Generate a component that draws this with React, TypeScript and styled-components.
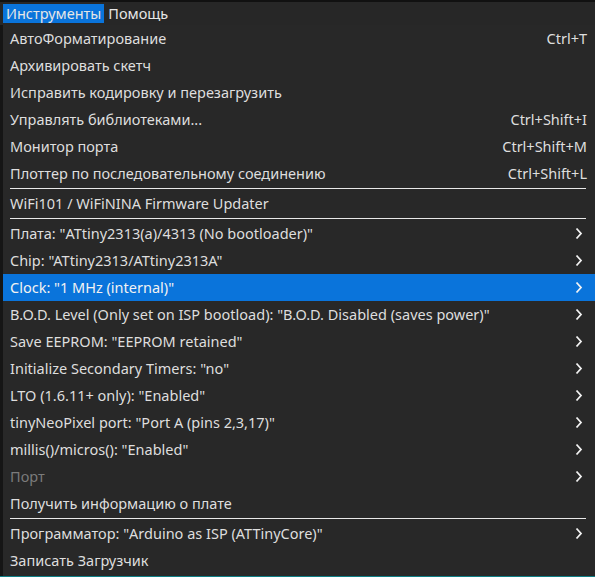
import { createGlobalStyle, styled } from "styled-components";

const GlobalStyle = createGlobalStyle`
  html, body {
    margin: 0;
    padding: 0;
    background: #1c1c1c;
  }
  body {
    font-family: "Noto Sans", "Open Sans", sans-serif;
    font-size: 14.5px;
    color: #dedede;
  }
`;

type Item =
  | { kind: "sep" }
  | { kind: "item"; label: string; shortcut?: string; sub?: boolean; active?: boolean; disabled?: boolean };

const items: Item[] = [
  { kind: "item", label: "АвтоФорматирование", shortcut: "Ctrl+T" },
  { kind: "item", label: "Архивировать скетч" },
  { kind: "item", label: "Исправить кодировку и перезагрузить" },
  { kind: "item", label: "Управлять библиотеками...", shortcut: "Ctrl+Shift+I" },
  { kind: "item", label: "Монитор порта", shortcut: "Ctrl+Shift+M" },
  { kind: "item", label: "Плоттер по последовательному соединению", shortcut: "Ctrl+Shift+L" },
  { kind: "sep" },
  { kind: "item", label: "WiFi101 / WiFiNINA Firmware Updater" },
  { kind: "sep" },
  { kind: "item", label: 'Плата: "ATtiny2313(a)/4313 (No bootloader)"', sub: true },
  { kind: "item", label: 'Chip: "ATtiny2313/ATtiny2313A"', sub: true },
  { kind: "item", label: 'Clock: "1 MHz (internal)"', sub: true, active: true },
  { kind: "item", label: 'B.O.D. Level (Only set on ISP bootload): "B.O.D. Disabled (saves power)"', sub: true },
  { kind: "item", label: 'Save EEPROM: "EEPROM retained"', sub: true },
  { kind: "item", label: 'Initialize Secondary Timers: "no"', sub: true },
  { kind: "item", label: 'LTO (1.6.11+ only): "Enabled"', sub: true },
  { kind: "item", label: 'tinyNeoPixel port: "Port A (pins 2,3,17)"', sub: true },
  { kind: "item", label: 'millis()/micros(): "Enabled"', sub: true },
  { kind: "item", label: "Порт", sub: true, disabled: true },
  { kind: "item", label: "Получить информацию о плате" },
  { kind: "sep" },
  { kind: "item", label: 'Программатор: "Arduino as ISP (ATTinyCore)"', sub: true },
  { kind: "item", label: "Записать Загрузчик" },
];

const Chevron = () => (
  <svg width="8" height="13" viewBox="0 0 8 13">
    <path d="M1.5 1.5 L6 6.5 L1.5 11.5" fill="none" stroke="#f2f2f2" strokeWidth="1.8" />
  </svg>
);

export default function App() {
  return (
    <Screen>
      <GlobalStyle />
      <MenuBar>
        <MenuTitle $open>Инструменты</MenuTitle>
        <MenuTitle>Помощь</MenuTitle>
      </MenuBar>
      <Panel>
        {items.map((it, i) =>
          it.kind === "sep" ? (
            <Separator key={i} />
          ) : (
            <Row key={i} $active={it.active} $disabled={it.disabled}>
              <Label>{it.label}</Label>
              {it.shortcut && <Shortcut>{it.shortcut}</Shortcut>}
              {it.sub && (
                <Arrow>
                  <Chevron />
                </Arrow>
              )}
            </Row>
          )
        )}
      </Panel>
      <WindowEdge />
    </Screen>
  );
}

const Screen = styled.div`
  width: 595px;
  height: 577px;
  overflow: hidden;
  display: flex;
  flex-direction: column;
  background: #151515;
`;

const MenuBar = styled.div`
  height: 25px;
  display: flex;
  align-items: center;
  gap: 1px;
  padding: 0 0 0 3px;
  box-sizing: border-box;
  background: #272727;
  border-top: 2px solid #111;
`;

const MenuTitle = styled.div<{ $open?: boolean }>`
  height: 19px;
  line-height: 19px;
  padding: 0 3px;
  color: #e6e6e6;
  background: ${(p) => (p.$open ? "#0a74db" : "transparent")};
`;

const Panel = styled.div`
  margin-left: 3px;
  background: #282828;
  padding: 0 0 2px 0;
  display: flex;
  flex-direction: column;
`;

const Row = styled.div<{ $active?: boolean; $disabled?: boolean }>`
  height: 27px;
  display: flex;
  align-items: center;
  padding: 0 8px 0 7px;
  background: ${(p) => (p.$active ? "#0a74db" : "transparent")};
  color: ${(p) => (p.$disabled ? "#7b7b7b" : p.$active ? "#f2f2f2" : "#dedede")};
`;

const Label = styled.span`
  flex: 1;
  white-space: nowrap;
  margin-top: -2px;
`;

const Shortcut = styled.span`
  white-space: nowrap;
  margin-top: -2px;
`;

const Arrow = styled.span`
  display: flex;
  align-items: center;
  margin-right: 4px;
`;

const Separator = styled.div`
  height: 1px;
  margin: 1px 9px 1px 7px;
  background: #e8e8e8;
`;

const WindowEdge = styled.div`
  flex: 1;
  background: linear-gradient(180deg, #0f7f86 0%, #0f7f86 80%, #cfcfcf 80%);
`;
